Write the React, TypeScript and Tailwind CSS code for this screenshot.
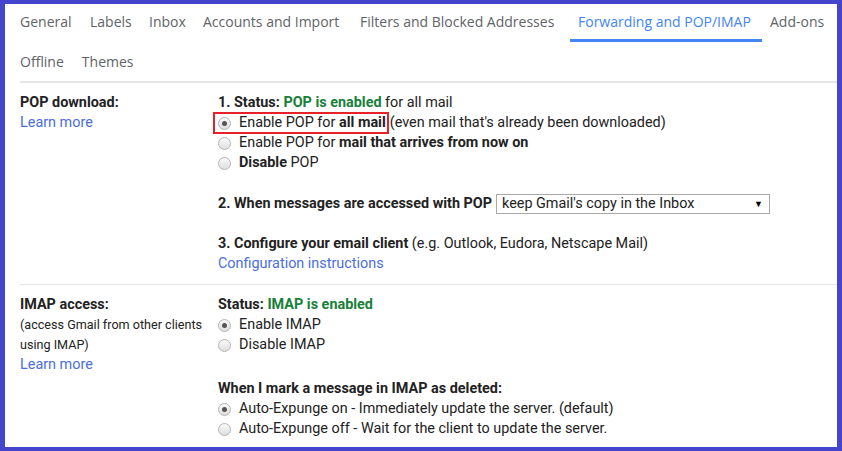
import type { ReactNode } from 'react';

const tabs = [
  { name: 'General', w: 'w-[70px]' },
  { name: 'Labels', w: 'w-[59px]' },
  { name: 'Inbox', w: 'w-[54px]' },
  { name: 'Accounts and Import', w: 'w-[157px]' },
  { name: 'Filters and Blocked Addresses', w: 'w-[218px]' },
  { name: 'Forwarding and POP/IMAP', w: 'w-[192px]' },
  { name: 'Add-ons', w: 'w-[74px]' },
];

function Radio({ checked = false }: { checked?: boolean }) {
  return (
    <span className="flex h-[13px] w-[13px] shrink-0 items-center justify-center rounded-full border border-[#b5b5b5] bg-gradient-to-b from-[#fafafa] to-[#dedede]">
      {checked ? <span className="h-[5px] w-[5px] rounded-full bg-[#555]" /> : null}
    </span>
  );
}

function Option({ checked, children }: { checked?: boolean; children: ReactNode }) {
  return (
    <div className="flex h-5 items-center gap-[8px]">
      <Radio checked={checked} />
      <span>{children}</span>
    </div>
  );
}

export default function App() {
  return (
    <div className="h-[451px] w-[842px] overflow-hidden border-b-4 border-l-[5px] border-r-[5px] border-t-4 border-[#4444cc] bg-white font-['Roboto',sans-serif] text-[14.4px] text-[#222]">
      <nav className="font-['Open_Sans',sans-serif] text-[14px] text-[#5f6368]">
        <div className="flex h-[38px] items-stretch pl-[7px]">
          {tabs.map((t) => (
            <div
              key={t.name}
              className={`flex shrink-0 items-center whitespace-nowrap pl-[8px] ${t.w} ${
                t.name === 'Forwarding and POP/IMAP'
                  ? 'border-b-[3px] border-[#4285f4] text-[#4285f4]'
                  : 'border-b-[3px] border-transparent'
              }`}
            >
              {t.name}
            </div>
          ))}
        </div>
        <div className="flex h-[39px] items-center gap-[18px] pl-[15px]">
          <span>Offline</span>
          <span>Themes</span>
        </div>
      </nav>

      <div className="ml-[15px] border-t-[2px] border-[#e5e5e5]" />

      <section className="flex pt-[10px] leading-5">
        <div className="w-[213px] shrink-0 pl-[15px]">
          <div className="font-bold">POP download:</div>
          <div className="text-[#4a6ee0]">Learn more</div>
        </div>
        <div>
          <div>
            <b>1. Status: </b>
            <b className="text-[#188038]">POP is enabled</b> for all mail
          </div>
          <div className="flex h-5 items-center">
            <span className="-ml-[5px] flex h-[22px] items-center gap-[8px] border-2 border-[#e8202a] pl-[3px] pr-[1px]">
              <Radio checked />
              <span>
                Enable POP for <b>all mail</b>
              </span>
            </span>
            <span className="ml-[1px]">(even mail that's already been downloaded)</span>
          </div>
          <Option>
            Enable POP for <b>mail that arrives from now on</b>
          </Option>
          <Option>
            <b>Disable</b> POP
          </Option>

          <div className="mt-[21px] flex items-center gap-[4px]">
            <b>2. When messages are accessed with POP</b>
            <div className="flex h-5 w-[274px] items-center justify-between border border-[#a9a9a9] pl-[5px] pr-[6px]">
              <span>keep Gmail's copy in the Inbox</span>
              <span className="text-[9px] text-black">▼</span>
            </div>
          </div>

          <div className="mt-[20px]">
            <b>3. Configure your email client</b> (e.g. Outlook, Eudora, Netscape Mail)
          </div>
          <div className="text-[#4a6ee0]">Configuration instructions</div>
        </div>
      </section>

      <div className="ml-[15px] mt-[10px] border-t border-[#e5e5e5]" />

      <section className="flex pt-[10px] leading-5">
        <div className="w-[213px] shrink-0 pl-[15px]">
          <div className="font-bold">IMAP access:</div>
          <div className="text-[12.6px]">(access Gmail from other clients</div>
          <div className="text-[12.6px]">using IMAP)</div>
          <div className="text-[#4a6ee0]">Learn more</div>
        </div>
        <div>
          <div>
            <b>Status: </b>
            <b className="text-[#188038]">IMAP is enabled</b>
          </div>
          <Option checked>Enable IMAP</Option>
          <Option>Disable IMAP</Option>

          <div className="mt-[24px] font-bold">When I mark a message in IMAP as deleted:</div>
          <Option checked>Auto-Expunge on - Immediately update the server. (default)</Option>
          <Option>Auto-Expunge off - Wait for the client to update the server.</Option>
        </div>
      </section>
    </div>
  );
}
